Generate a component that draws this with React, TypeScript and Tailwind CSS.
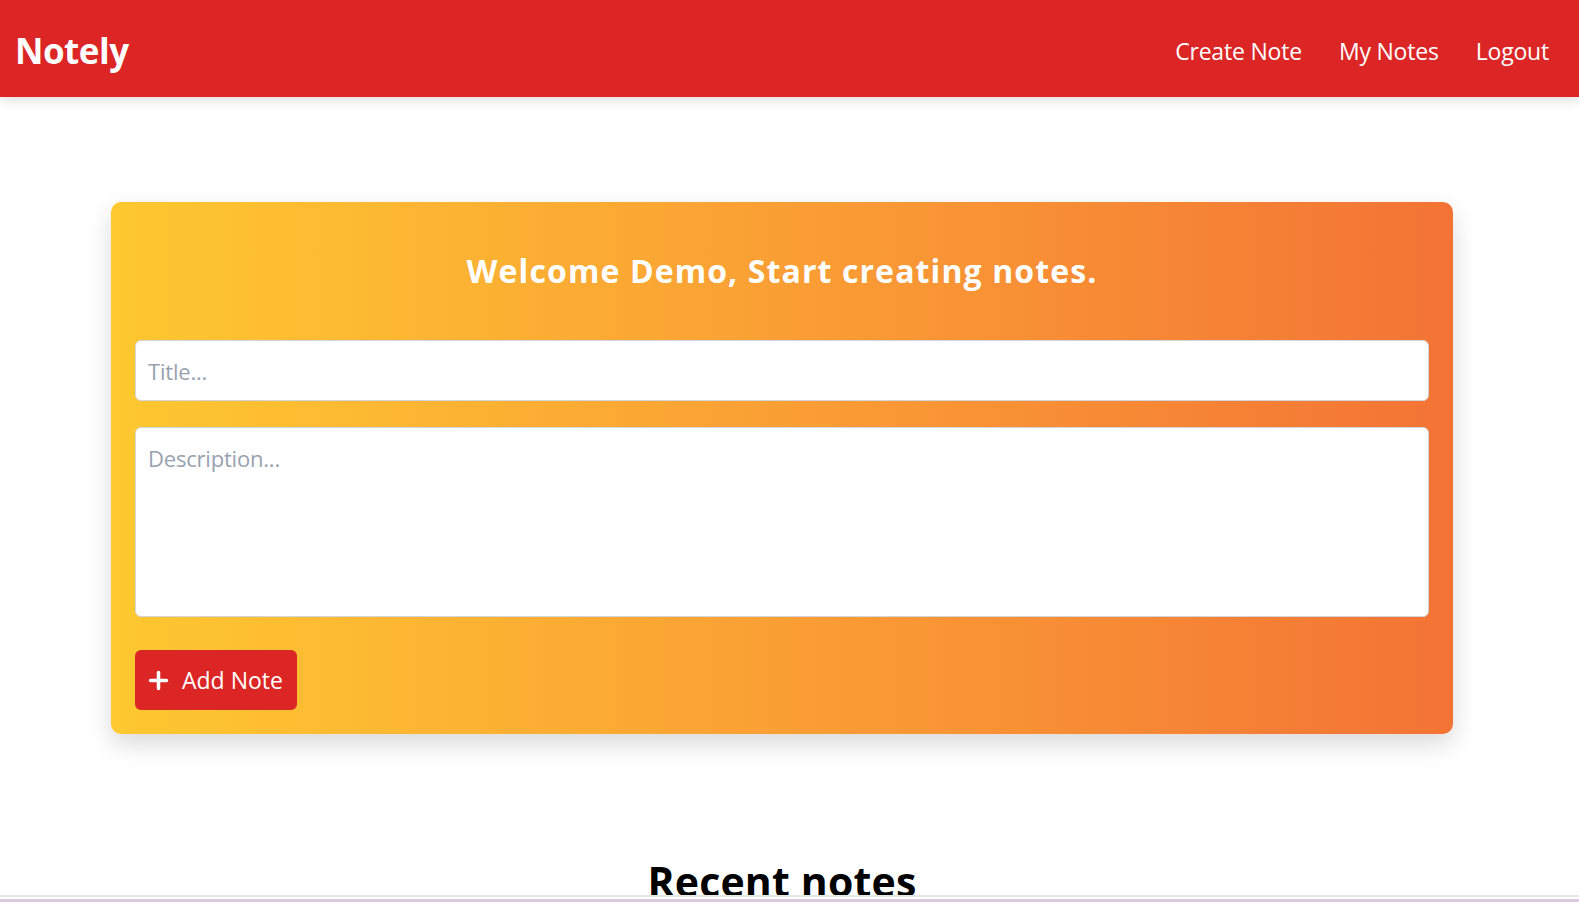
import React from 'react';

const font = { fontFamily: '"Open Sans", "Noto Sans", sans-serif' };

const navLinks = ['Create Note', 'My Notes', 'Logout'];

const PlusIcon: React.FC = () => (
  <svg width="21" height="21" viewBox="0 0 21 21" fill="none">
    <path d="M10.5 2.5v16M2.5 10.5h16" stroke="white" strokeWidth="3.5" strokeLinecap="round" />
  </svg>
);

const App: React.FC = () => {
  return (
    <div className="min-h-screen bg-white overflow-hidden" style={font}>
      <nav className="h-[97px] bg-[#dc2626] flex items-center justify-between pl-[15px] pr-[30px] pt-[5px] shadow-[0_4px_10px_rgba(0,0,0,0.12)] relative z-10">
        <span className="text-[35px] font-bold text-white tracking-[-0.5px]">Notely</span>
        <div className="flex gap-[37px]">
          {navLinks.map((link) => (
            <a key={link} href="#" className="text-[23px] text-white tracking-[-0.2px]">
              {link}
            </a>
          ))}
        </div>
      </nav>

      <main className="w-[1564px] flex flex-col items-center">
        <div className="w-[1342px] mt-[105px] rounded-[10px] bg-gradient-to-r from-[#FDC830] to-[#F37335] shadow-[0_10px_25px_rgba(0,0,0,0.15)] px-6 pt-[51px] pb-6">
          <h1 className="text-center text-[32px] leading-9 font-bold text-white tracking-[1.1px] mb-[51px]">
            Welcome Demo, Start creating notes.
          </h1>
          <input
            type="text"
            placeholder="Title..."
            className="w-full h-[61px] px-3 rounded-md border border-gray-300 bg-white text-[22px] placeholder:text-gray-400 outline-none tracking-[-0.2px]"
          />
          <textarea
            placeholder="Description..."
            className="w-full h-[190px] mt-[26px] px-3 pt-[14px] pb-3 rounded-md border border-gray-300 bg-white text-[22px] leading-8 placeholder:text-gray-400 outline-none resize-none block tracking-[-0.2px]"
          />
          <button className="mt-[33px] h-[60px] w-[162px] flex items-center gap-[13px] pl-[13px] rounded-md bg-[#dc2626] text-white text-[23px]">
            <PlusIcon />
            Add Note
          </button>
        </div>

        <h2 className="mt-[127px] text-[41px] leading-10 font-bold text-black tracking-[0.2px]">Recent notes</h2>
      </main>

      <div className="fixed bottom-0 left-0 right-0 h-[7px] flex flex-col">
        <div className="h-[2px] bg-[#e6e8e6]" />
        <div className="h-[2px] bg-white" />
        <div className="h-[3px] bg-[#dccbe0]" />
      </div>
    </div>
  );
};

export default App;
